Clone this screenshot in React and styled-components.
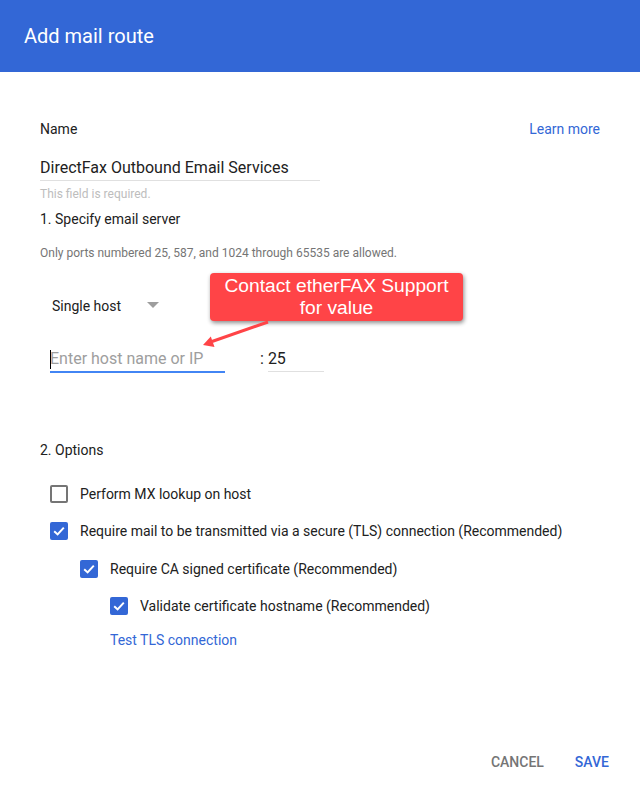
import React from 'react';
import styled, { createGlobalStyle } from 'styled-components';

const GlobalStyle = createGlobalStyle`
  html, body {
    margin: 0;
    padding: 0;
    background: #fff;
  }
  body {
    font-family: Roboto, "Noto Sans", sans-serif;
    color: #212121;
  }
`;

const Dialog = styled.div`
  width: 640px;
  min-height: 789px;
  display: flex;
  flex-direction: column;
  background: #fff;
`;

const Header = styled.div`
  height: 72px;
  background: #3367d6;
  display: flex;
  align-items: center;
  padding: 0 24px;
  box-sizing: border-box;
`;

const Title = styled.h1`
  margin: 0;
  font-size: 20px;
  font-weight: 400;
  color: #fff;
`;

const Body = styled.div`
  position: relative;
  padding: 47px 40px 0;
  display: flex;
  flex-direction: column;
`;

const NameRow = styled.div`
  display: flex;
  justify-content: space-between;
  align-items: center;
  height: 20px;
  font-size: 14px;
`;

const Link = styled.a`
  color: #3367d6;
  font-size: 14px;
  line-height: 20px;
  text-decoration: none;
  margin-top: ${(p) => p.$top || 0}px;
  margin-left: ${(p) => p.$indent || 0}px;
`;

const TextField = styled.div`
  width: ${(p) => p.$width}px;
  height: 24px;
  line-height: 24px;
  font-size: 16px;
  color: ${(p) => (p.$placeholder ? '#9e9e9e' : '#212121')};
  border-bottom: ${(p) => (p.$focused ? '2px solid #4285f4' : '1px solid #e0e0e0')};
  white-space: nowrap;
  position: relative;
  ${(p) =>
    p.$focused &&
    `
    &::before {
      content: '';
      position: absolute;
      left: 0;
      top: 3px;
      width: 1px;
      height: 19px;
      background: #000;
    }
  `}
`;

const NameField = styled(TextField)`
  margin-top: 17px;
`;

const Helper = styled.div`
  font-size: 12px;
  line-height: 16px;
  color: ${(p) => p.$color || '#bdbdbd'};
  margin-top: ${(p) => p.$top}px;
`;

const SectionTitle = styled.div`
  font-size: 14px;
  line-height: 20px;
  margin-top: ${(p) => p.$top}px;
`;

const Select = styled.div`
  margin-top: 35px;
  margin-left: 12px;
  width: 107px;
  height: 20px;
  display: flex;
  justify-content: space-between;
  align-items: center;
  font-size: 14px;
`;

const Caret = styled.span`
  width: 0;
  height: 0;
  border-left: 6px solid transparent;
  border-right: 6px solid transparent;
  border-top: 6px solid #9e9e9e;
  margin-top: -2px;
`;

const HostRow = styled.div`
  margin-top: 31px;
  margin-left: 10px;
  display: flex;
  align-items: flex-start;
`;

const Colon = styled.span`
  font-size: 16px;
  line-height: 24px;
  margin-left: 35px;
  margin-right: 4px;
`;

const Options = styled.div`
  margin-top: 24px;
  display: flex;
  flex-direction: column;
  gap: 17.4px;
`;

const OptionRow = styled.label`
  display: flex;
  align-items: center;
  gap: 12px;
  height: 20px;
  font-size: 14px;
  padding-left: ${(p) => 10 + p.$level * 30}px;
`;

const Box = styled.span`
  width: 18px;
  height: 18px;
  box-sizing: border-box;
  border-radius: 2px;
  display: flex;
  align-items: center;
  justify-content: center;
  background: ${(p) => (p.$checked ? '#3367d6' : '#fff')};
  border: ${(p) => (p.$checked ? 'none' : '2px solid #757575')};
`;

const Footer = styled.div`
  margin-top: auto;
  display: flex;
  justify-content: flex-end;
  gap: 31px;
  padding: 0 31px 17px 0;
`;

const Button = styled.button`
  border: none;
  background: none;
  padding: 0;
  font-family: Roboto, sans-serif;
  font-size: 14px;
  font-weight: 500;
  line-height: 20px;
  color: ${(p) => (p.$primary ? '#3367d6' : '#757575')};
`;

const Callout = styled.div`
  position: absolute;
  left: 210px;
  top: 201px;
  width: 253px;
  height: 48px;
  box-sizing: border-box;
  padding-top: 2px;
  background: #ff4447;
  border-radius: 4px;
  box-shadow: 1px 2px 4px rgba(0, 0, 0, 0.45);
  color: #fff;
  font-family: "Liberation Sans", Arial, sans-serif;
  font-size: 19.2px;
  line-height: 22px;
  text-align: center;
`;

const Arrow = styled.svg`
  position: absolute;
  left: 195px;
  top: 245px;
`;

const Check = () => (
  <svg width="14" height="14" viewBox="0 0 14 14">
    <path d="M2.2 7.2 L5.6 10.4 L11.8 3.6" fill="none" stroke="#fff" strokeWidth="2" />
  </svg>
);

const Option = ({ level, checked, children }) => (
  <OptionRow $level={level}>
    <Box $checked={checked}>{checked && <Check />}</Box>
    {children}
  </OptionRow>
);

const App = () => (
  <Dialog>
    <GlobalStyle />
    <Header>
      <Title>Add mail route</Title>
    </Header>
    <Body>
      <NameRow>
        <span>Name</span>
        <Link href="#">Learn more</Link>
      </NameRow>
      <NameField $width={280}>DirectFax Outbound Email Services</NameField>
      <Helper $top={5}>This field is required.</Helper>
      <SectionTitle $top={7}>1. Specify email server</SectionTitle>
      <Helper $top={16} $color="#757575">
        Only ports numbered 25, 587, and 1024 through 65535 are allowed.
      </Helper>
      <Select>
        <span>Single host</span>
        <Caret />
      </Select>
      <HostRow>
        <TextField $width={175} $focused $placeholder>
          Enter host name or IP
        </TextField>
        <Colon>:</Colon>
        <TextField $width={56}>25</TextField>
      </HostRow>
      <SectionTitle $top={67}>2. Options</SectionTitle>
      <Options>
        <Option level={0}>Perform MX lookup on host</Option>
        <Option level={0} checked>
          Require mail to be transmitted via a secure (TLS) connection (Recommended)
        </Option>
        <Option level={1} checked>
          Require CA signed certificate (Recommended)
        </Option>
        <Option level={2} checked>
          Validate certificate hostname (Recommended)
        </Option>
      </Options>
      <Link href="#" $top={14} $indent={70}>
        Test TLS connection
      </Link>

      <Callout>
        Contact etherFAX Support
        <br />
        for value
      </Callout>
      <Arrow width="80" height="36" viewBox="0 0 80 36">
        <line x1="73" y1="5" x2="17" y2="24.5" stroke="#ff4447" strokeWidth="3" />
        <polygon points="8,28 19.5,30 15.8,19.5" fill="#ff4447" />
      </Arrow>
    </Body>
    <Footer>
      <Button>CANCEL</Button>
      <Button $primary>SAVE</Button>
    </Footer>
  </Dialog>
);

export default App;
